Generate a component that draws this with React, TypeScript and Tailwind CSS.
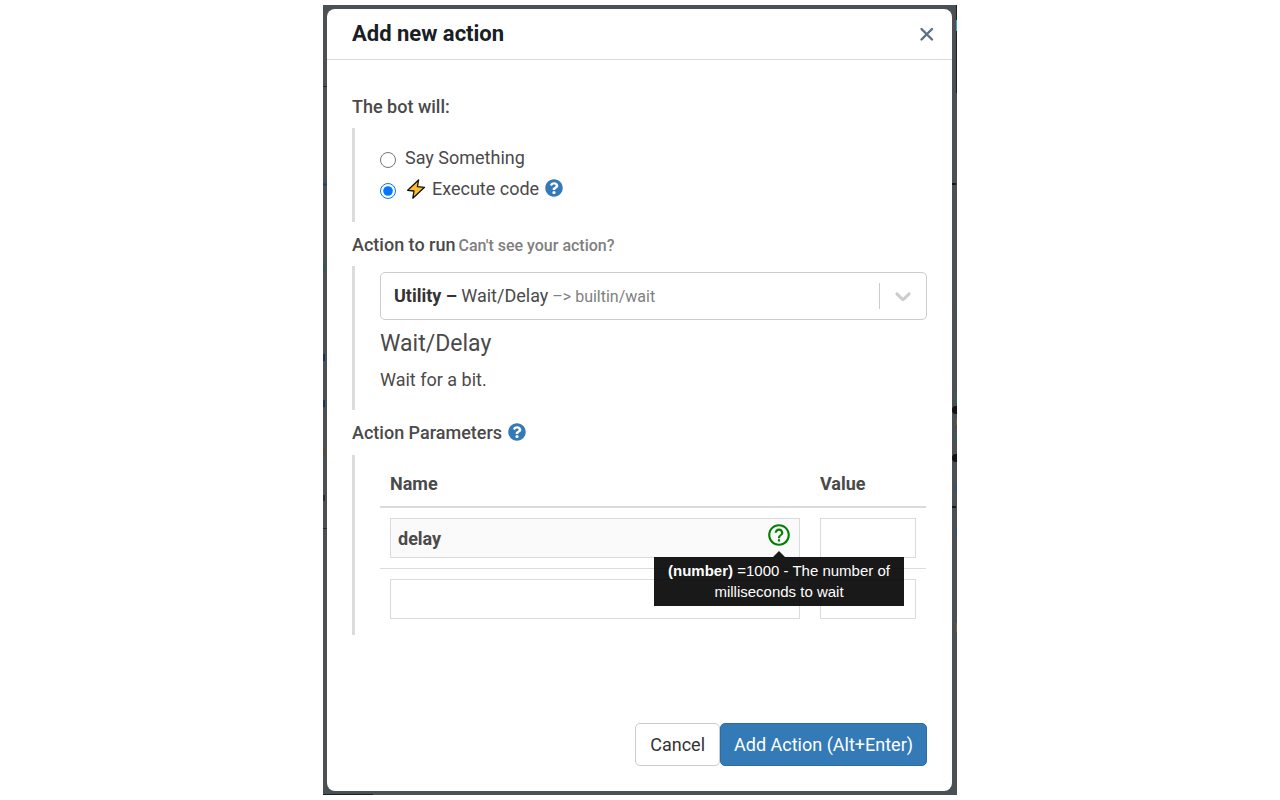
import { useState } from "react";
import { FaQuestionCircle } from "react-icons/fa";
import { MdHelpOutline } from "react-icons/md";

function HelpButton({ label }: { label: string }) {
  return (
    <button type="button" aria-label={label} className="mb-0.5 ml-1.5 text-[18px] text-[#337ab7]">
      <FaQuestionCircle />
    </button>
  );
}

function Bolt() {
  return (
    <svg viewBox="0 0 20 20" className="h-5 w-5 shrink-0" aria-hidden="true">
      <path
        d="M12.6 1 L1.7 11.3 L8 12 L6.8 19.2 L18.5 8.3 L11.4 7.6 Z"
        fill="#fdbd2e"
        stroke="#111"
        strokeWidth="1.3"
        strokeLinejoin="round"
      />
    </svg>
  );
}

function Tooltip() {
  return (
    <span
      role="tooltip"
      className="absolute top-full left-1/2 z-10 mt-[9px] w-[250px] -translate-x-1/2 bg-black/90 px-2 pt-[3px] pb-1 text-center font-['Liberation_Sans',Arial,sans-serif] text-[15px] leading-[21px] font-normal text-white"
    >
      <svg viewBox="0 0 12 6" className="absolute -top-[6px] left-1/2 h-[6px] w-3 -translate-x-1/2" aria-hidden="true">
        <path d="M6 0 L12 6 H0 Z" fill="#000" fillOpacity="0.9" />
      </svg>
      <b>(number)</b> =1000 - The number of milliseconds to wait
    </span>
  );
}

/* Slivers of the dimmed flow editor that stay visible around the dialog. */
function DimmedEditor() {
  return (
    <>
      <svg className="absolute top-0 left-0 h-full w-1" aria-hidden="true">
        <path d="M0 81.5H4 M0 523.5H4" stroke="#1d2a3c" />
        <path d="M0 179.5H4" stroke="#22406b" strokeWidth="2" />
        <path d="M1 258V266 M1 397V403" stroke="#2b5a4a" strokeWidth="2" />
        <path d="M1 349V356 M1 395V402" stroke="#1e2f66" strokeWidth="2" />
        <path d="M1 443V450" stroke="#5a4a2c" strokeWidth="2" />
        <path d="M1 490V496" stroke="#2c2c2c" strokeWidth="2" />
      </svg>
      <svg className="absolute top-0 right-0 h-full w-[5px]" aria-hidden="true">
        <path d="M4.5 0V88" stroke="#1b2024" />
        <path d="M4.5 15V26" stroke="#3f9fd0" />
        <path d="M0 179H4 M0 502H4" stroke="#15181a" strokeWidth="2" />
        <circle cx="4" cy="405" r="4" fill="#111315" />
        <circle cx="4" cy="453" r="4" fill="#111315" />
        <path d="M4.5 308V311 M4.5 478V487 M4.5 524V532" stroke="#2a4f80" />
        <path d="M4.5 390V398 M4.5 430V436" stroke="#1f6b55" />
        <path d="M4.5 414V420 M4.5 618V627" stroke="#7a6030" />
      </svg>
      <div className="absolute bottom-0 left-0 h-px w-[50px] bg-[#1c1f26]" />
    </>
  );
}

const inputClass = "block h-10 w-full border border-[#dbdbdb] px-[7px] text-[18px] outline-none";

export default function App() {
  const [kind, setKind] = useState("code");
  const [name, setName] = useState("");
  const [values, setValues] = useState(["", ""]);

  return (
    <div className="min-h-screen bg-white py-[5px] font-[Roboto,sans-serif] text-[18px] leading-6 text-[#4a4a4a]">
      <div className="relative mx-auto max-w-[634px] bg-[#4b5054] py-1 pr-[5px] pl-1">
        <DimmedEditor />
        <section role="dialog" aria-labelledby="dialog-title" className="relative rounded-lg bg-white">
          <header className="flex h-[51px] items-center justify-between border-b border-[#d9dadb] pr-4 pl-[25px]">
            <h1 id="dialog-title" className="text-[22px] leading-7 font-bold text-[#182026]">
              Add new action
            </h1>
            <button type="button" aria-label="Close" className="text-[#5c7080]">
              <svg viewBox="0 0 18 18" className="h-[18px] w-[18px]" aria-hidden="true">
                <path d="M3.5 4 L14 14.5 M14 4 L3.5 14.5" stroke="currentColor" strokeWidth="2.4" strokeLinecap="round" />
              </svg>
            </button>
          </header>

          <form className="px-[25px] pt-6 pb-[25px]" onSubmit={(e) => e.preventDefault()}>
            <h2 className="flex h-11 items-center pt-0.5 font-medium">The bot will:</h2>
            <fieldset className="border-l-3 border-[#dcdcdc] pt-[14px] pb-[18px] pl-[25px]">
              <label className="flex h-[31px] items-center">
                <input
                  type="radio"
                  name="kind"
                  className="mt-1 mr-[9px] h-4 w-4"
                  checked={kind === "say"}
                  onChange={() => setKind("say")}
                />
                Say Something
              </label>
              <div className="flex h-[31px] items-center">
                <label className="flex items-center">
                  <input
                    type="radio"
                    name="kind"
                    className="mt-1 mr-[10px] h-4 w-4"
                    checked={kind === "code"}
                    onChange={() => setKind("code")}
                  />
                  <Bolt />
                  <span className="ml-[6px]">Execute code</span>
                </label>
                <HelpButton label="About executing code" />
              </div>
            </fieldset>

            <h2 className="flex h-11 items-center pt-0.5 font-medium">
              <span>
                Action to run
                <a href="#actions" className="ml-[3px] text-[16px] text-[#808080]">
                  Can't see your action?
                </a>
              </span>
            </h2>
            <div className="border-l-3 border-[#dcdcdc] pt-[6px] pb-[18px] pl-[25px]">
              <button
                type="button"
                aria-haspopup="listbox"
                className="flex h-12 w-full items-center rounded-[5px] border border-[#cccccc] pl-[13px] text-left"
              >
                <span className="flex items-baseline">
                  <span className="font-bold text-[#333]">Utility –</span>
                  <span className="ml-1">Wait/Delay</span>
                  <span className="ml-1 text-[16px] text-[#808080]">–&gt; builtin/wait</span>
                </span>
                <span className="ml-auto h-[26px] border-l border-[#cccccc]" />
                <svg viewBox="0 0 20 20" className="mx-[10px] h-[26px] w-[26px] fill-[#cccccc]" aria-hidden="true">
                  <path d="M4.516 7.548c0.436-0.446 1.043-0.481 1.576 0l3.908 3.747 3.908-3.747c0.533-0.481 1.141-0.446 1.574 0 0.436 0.445 0.408 1.197 0 1.615-0.406 0.418-4.695 4.502-4.695 4.502-0.217 0.223-0.502 0.335-0.787 0.335s-0.57-0.112-0.789-0.335c0 0-4.287-4.084-4.695-4.502s-0.436-1.17 0-1.615z" />
                </svg>
              </button>
              <h3 className="mt-2 text-[23px] leading-8">Wait/Delay</h3>
              <p className="mt-2">Wait for a bit.</p>
            </div>

            <h2 className="flex h-[45px] items-center font-medium">
              Action Parameters
              <HelpButton label="About action parameters" />
            </h2>
            <div className="border-l-3 border-[#dcdcdc] pr-px pb-[6px] pl-[25px]">
              <table className="w-full table-fixed border-collapse">
                <thead>
                  <tr className="h-[52px] border-b-2 border-[#dbdbdb] text-left font-bold">
                    <th className="px-[10px] pt-[7px]">Name</th>
                    <th className="w-[116px] px-[10px] pt-[7px]">Value</th>
                  </tr>
                </thead>
                <tbody>
                  <tr className="border-b border-[#dbdbdb]">
                    <td className="relative p-[10px]">
                      <input
                        aria-label="Parameter name"
                        className={`${inputClass} bg-[#fafafa] font-bold`}
                        value="delay"
                        readOnly
                      />
                      <button
                        type="button"
                        aria-label="About delay"
                        className="absolute top-[14px] right-[18px] text-[26px] text-[#008000]"
                      >
                        <MdHelpOutline />
                        <Tooltip />
                      </button>
                    </td>
                    <td className="p-[10px]">
                      <input
                        aria-label="Value of delay"
                        className={inputClass}
                        value={values[0]}
                        onChange={(e) => setValues([e.target.value, values[1]])}
                      />
                    </td>
                  </tr>
                  <tr>
                    <td className="p-[10px]">
                      <input
                        aria-label="New parameter name"
                        className={inputClass}
                        value={name}
                        onChange={(e) => setName(e.target.value)}
                      />
                    </td>
                    <td className="p-[10px]">
                      <input
                        aria-label="New parameter value"
                        className={inputClass}
                        value={values[1]}
                        onChange={(e) => setValues([values[0], e.target.value])}
                      />
                    </td>
                  </tr>
                </tbody>
              </table>
            </div>

            <footer className="mt-[88px] flex justify-end">
              <button type="button" className="h-[43px] rounded-[5px] border border-[#cccccc] px-[14px] text-[#333]">
                Cancel
              </button>
              <button
                type="submit"
                className="h-[43px] rounded-[5px] border border-[#2e6da4] bg-[#337ab7] px-[13px] text-white"
              >
                Add Action (Alt+Enter)
              </button>
            </footer>
          </form>
        </section>
      </div>
    </div>
  );
}
